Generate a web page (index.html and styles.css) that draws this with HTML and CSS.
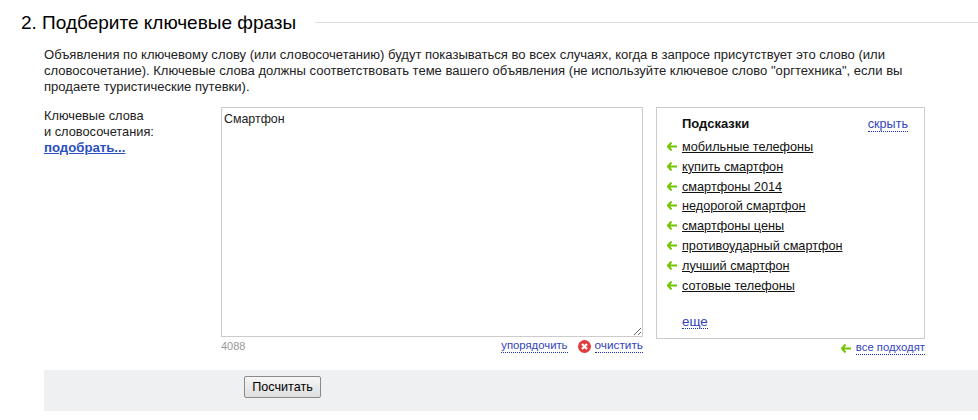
FILE: index.html
```html
<!DOCTYPE html>
<html lang="ru">
<head>
<meta charset="utf-8">
<title>Подберите ключевые фразы</title>
<link rel="stylesheet" href="styles.css">
</head>
<body>
<section class="step">
  <header class="step-head">
    <h2 class="step-title">2. Подберите ключевые фразы</h2>
    <div class="step-rule"></div>
  </header>
  <p class="intro">Объявления по ключевому слову (или словосочетанию) будут показываться во всех случаях, когда в запросе присутствует это слово (или<br>словосочетание). Ключевые слова должны соответствовать теме вашего объявления (не используйте ключевое слово "оргтехника", если вы<br>продаете туристические путевки).</p>
  <div class="form-row">
    <div class="label-col">
      <div>Ключевые слова<br>и словосочетания:</div>
      <a class="pick" href="#">подобрать...</a>
    </div>
    <div class="editor-col">
      <textarea class="keywords">Смартфон</textarea>
      <div class="editor-foot">
        <span class="count">4088</span>
        <a class="dotted" href="#">упорядочить</a>
        <svg class="clear-icon" width="13" height="13" viewBox="0 0 13 13"><circle cx="6.5" cy="6.5" r="6.5" fill="#e33b3b"/><path d="M4 4l5 5M9 4l-5 5" stroke="#fff" stroke-width="2.2"/></svg>
        <a class="dotted clear-link" href="#">очистить</a>
      </div>
    </div>
    <div class="hints-col">
      <div class="hints">
        <div class="hints-head">
          <strong class="hints-title">Подсказки</strong>
          <a class="dotted hide" href="#">скрыть</a>
        </div>
        <ul class="hint-list">
          <li><svg class="arrow" width="10" height="9" viewBox="0 0 10 9"><path d="M4.5.5L1 4.5l3.5 4M1.5 4.5H10" fill="none" stroke="#74c400" stroke-width="2"/></svg><a href="#">мобильные телефоны</a></li>
          <li><svg class="arrow" width="10" height="9" viewBox="0 0 10 9"><path d="M4.5.5L1 4.5l3.5 4M1.5 4.5H10" fill="none" stroke="#74c400" stroke-width="2"/></svg><a href="#">купить смартфон</a></li>
          <li><svg class="arrow" width="10" height="9" viewBox="0 0 10 9"><path d="M4.5.5L1 4.5l3.5 4M1.5 4.5H10" fill="none" stroke="#74c400" stroke-width="2"/></svg><a href="#">смартфоны 2014</a></li>
          <li><svg class="arrow" width="10" height="9" viewBox="0 0 10 9"><path d="M4.5.5L1 4.5l3.5 4M1.5 4.5H10" fill="none" stroke="#74c400" stroke-width="2"/></svg><a href="#">недорогой смартфон</a></li>
          <li><svg class="arrow" width="10" height="9" viewBox="0 0 10 9"><path d="M4.5.5L1 4.5l3.5 4M1.5 4.5H10" fill="none" stroke="#74c400" stroke-width="2"/></svg><a href="#">смартфоны цены</a></li>
          <li><svg class="arrow" width="10" height="9" viewBox="0 0 10 9"><path d="M4.5.5L1 4.5l3.5 4M1.5 4.5H10" fill="none" stroke="#74c400" stroke-width="2"/></svg><a href="#">противоударный смартфон</a></li>
          <li><svg class="arrow" width="10" height="9" viewBox="0 0 10 9"><path d="M4.5.5L1 4.5l3.5 4M1.5 4.5H10" fill="none" stroke="#74c400" stroke-width="2"/></svg><a href="#">лучший смартфон</a></li>
          <li><svg class="arrow" width="10" height="9" viewBox="0 0 10 9"><path d="M4.5.5L1 4.5l3.5 4M1.5 4.5H10" fill="none" stroke="#74c400" stroke-width="2"/></svg><a href="#">сотовые телефоны</a></li>
        </ul>
        <a class="dotted more" href="#">еще</a>
      </div>
      <div class="hints-foot">
        <svg class="arrow" width="10" height="9" viewBox="0 0 10 9"><path d="M4.5.5L1 4.5l3.5 4M1.5 4.5H10" fill="none" stroke="#74c400" stroke-width="2"/></svg>
        <a class="dotted" href="#">все подходят</a>
      </div>
    </div>
  </div>
  <div class="submit-bar">
    <button class="submit" type="button">Посчитать</button>
  </div>
</section>
</body>
</html>
```

FILE: styles.css
```css
* { box-sizing: border-box; }
html, body { margin: 0; padding: 0; background: #fff; }
body {
  font-family: "Liberation Sans", Arial, sans-serif;
  font-size: 13px;
  line-height: 16px;
  color: #222;
  overflow: hidden;
}
.step { padding-top: 12px; }
.step-head {
  display: flex;
  align-items: center;
  padding-left: 21px;
  gap: 19px;
  height: 22px;
}
.step-title {
  margin: 0;
  font-size: 19px;
  font-weight: 400;
  line-height: 22px;
  color: #000;
  white-space: nowrap;
}
.step-rule { flex: 1; height: 1px; background: #ddd; margin-top: -1px; }
.intro { margin: 13px 0 0 44px; white-space: nowrap; font-size: 13.05px; }
.form-row { display: flex; margin-top: 12px; padding-left: 44px; }
.label-col { width: 177px; padding-top: 1px; font-size: 12.8px; }
.pick { color: #2b50c0; font-weight: 700; font-size: 13.2px; text-decoration: underline; }
.editor-col { width: 422px; }
.keywords {
  display: block;
  width: 422px;
  height: 230px;
  margin: 0;
  padding: 3px 2px 2px;
  border: 1px solid #ccc;
  font: 12.4px/16px "Liberation Sans", Arial, sans-serif;
  color: #222;
  outline: none;
}
.editor-foot { display: flex; align-items: center; margin-top: 1px; height: 16px; font-size: 11.3px; }
.count { color: #999; margin-right: auto; font-size: 11px; }
.clear-icon { margin: 0 4px 0 10px; }
.clear-link { font-size: 11.8px; }
.dotted { color: #3344bb; text-decoration: none; border-bottom: 1px dotted #1c2fc0; line-height: 13px; }
.hints-col { width: 269px; margin-left: 13px; }
.hints {
  height: 232px;
  border: 1px solid #ccc;
  padding: 8px 16px 0 25px;
  display: flex;
  flex-direction: column;
  align-items: flex-start;
}
.hints-head { display: flex; width: 100%; justify-content: space-between; }
.hints-title { color: #111; font-size: 13px; }
.hide { align-self: flex-end; font-size: 12.6px; }
.hint-list { list-style: none; margin: 6px 0 0; padding: 0; font-size: 12.7px; }
.hint-list li { position: relative; height: 19.8px; line-height: 19.8px; white-space: nowrap; }
.hint-list a { color: #111; text-decoration: underline; }
.hint-list .arrow { position: absolute; left: -15px; top: 4px; }
.more { margin-top: 19px; font-size: 13.4px; }
.hints-foot { display: flex; justify-content: flex-end; align-items: center; gap: 5px; margin-top: 2px; font-size: 11.3px; }
.submit-bar {
  margin: 15px 0 0 44px;
  height: 41px;
  background: #eff0f2;
  padding: 6px 0 0 200px;
}
.submit {
  display: block;
  width: 77px;
  height: 22px;
  padding: 0;
  font: 12.6px "Liberation Sans", Arial, sans-serif;
  color: #000;
  background: linear-gradient(#f6f6f6, #dedede);
  border: 1px solid #8a8a8a;
  border-radius: 2px;
}
```
